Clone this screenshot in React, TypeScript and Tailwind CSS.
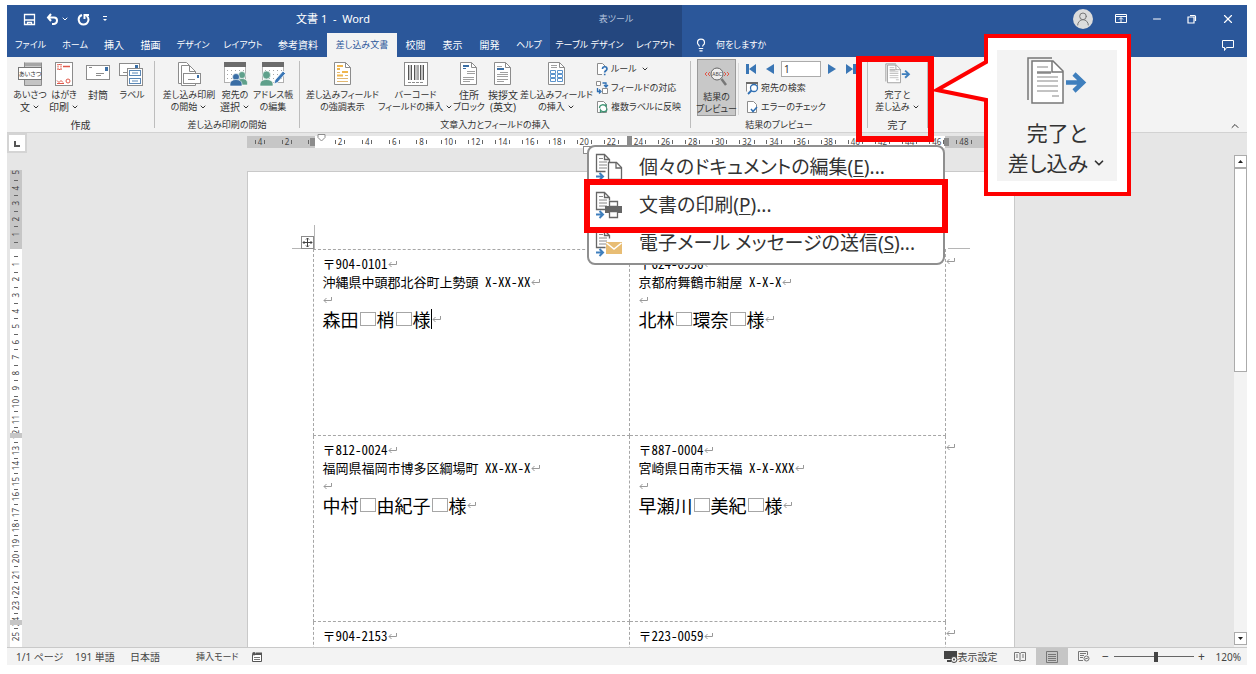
import type { ReactNode } from 'react';
import { Lightbulb, Minus, X, UserRound, ChevronUp, ChevronDown } from 'lucide-react';

const tabs = [
  { name: 'ファイル', width: 'w-[47px]' },
  { name: 'ホーム', width: 'w-[42px]' },
  { name: '挿入', width: 'w-[36px]' },
  { name: '描画', width: 'w-[37px]' },
  { name: 'デザイン', width: 'w-[48px]' },
  { name: 'レイアウト', width: 'w-[52px]' },
  { name: '参考資料', width: 'w-[58px]' },
  { name: '差し込み文書', width: 'w-[70px]', active: true },
  { name: '校閲', width: 'w-[37px]' },
  { name: '表示', width: 'w-[37px]' },
  { name: '開発', width: 'w-[37px]' },
  { name: 'ヘルプ', width: 'w-[42px]' },
];

const labels = [
  [
    { zip: '904-0101', address: '沖縄県中頭郡北谷町上勢頭 X-XX-XX', name: ['森田', '梢', '様'], caret: true },
    { zip: '624-0956', address: '京都府舞鶴市紺屋 X-X-X', name: ['北林', '環奈', '様'] },
  ],
  [
    { zip: '812-0024', address: '福岡県福岡市博多区綱場町 XX-XX-X', name: ['中村', '由紀子', '様'] },
    { zip: '887-0004', address: '宮崎県日南市天福 X-X-XXX', name: ['早瀬川', '美紀', '様'] },
  ],
  [
    { zip: '904-2153', address: '', name: [] },
    { zip: '223-0059', address: '', name: [] },
  ],
];

const labelSize = (text: string) => (/[ぁ-ヶ]/.test(text) ? 'text-[9px]' : 'text-[10px]');

const Caret = () => <ChevronDown className="inline w-2 h-2 ml-0.5" strokeWidth={3} />;

/* ---------- icons ---------- */

const GreetingIcon = () => (
  <svg width="26" height="26" viewBox="0 0 26 26">
    <path d="M7 1.5h17v4H7z" fill="#a6a6a6" />
    <path d="M7.5 1.5v23h17v-23M9 20.5h14M9 22.5h14" fill="none" stroke="#8c8c8c" />
    <path d="M8 19h16v5H8z" fill="#c4c4c4" />
    <rect x="1.5" y="6.5" width="23" height="12" fill="#fff" stroke="#777" />
    <text x="13" y="15" fontSize="6" textAnchor="middle" fill="#333">あいさつ</text>
  </svg>
);

const PostcardIcon = () => (
  <svg width="26" height="26" viewBox="0 0 26 26">
    <rect x="4.500" y="1.500" width="17" height="23" fill="#fff" stroke="#8c8c8c" />
    <g stroke="#e0584a" fill="none">
      <path d="M6.500 3.500h4M6.500 8.500h4" strokeDasharray="1 .5" />
      <path d="M7 3v6M10 3v6" strokeDasharray="1.500 .5" />
      <path d="M12 5.500h7" strokeWidth="1.500" />
      <path d="M6 19.500l2 2 2-2 2 2M6 22.500h7" />
      <circle cx="17" cy="20" r="2" />
    </g>
  </svg>
);

const EnvelopeIcon = () => (
  <svg width="26" height="26" viewBox="0 0 26 26">
    <rect x="1.500" y="4.500" width="23" height="14" fill="#fff" stroke="#8c8c8c" />
    <rect x="20" y="6" width="3" height="4" fill="#3a6ea5" />
    <path d="M4 6.500h3M11 12.500h8M11 14.500h5" stroke="#8c8c8c" />
  </svg>
);

const LabelIcon = () => (
  <svg width="26" height="26" viewBox="0 0 26 26">
    <rect x=".5" y="2.500" width="20" height="12" fill="#fff" stroke="#8c8c8c" />
    <rect x="16" y="4" width="3" height="3" fill="#3a6ea5" />
    <path d="M4 11.500h4" stroke="#8c8c8c" />
    <rect x="8.500" y="7.500" width="15" height="17" fill="#fff" stroke="#8c8c8c" />
    <g fill="#fff" stroke="#5b87b5">
      <rect x="10.500" y="9.500" width="11" height="5" />
      <rect x="10.500" y="17.500" width="11" height="5" />
      <path d="M13 12h6M13 20h6" />
    </g>
  </svg>
);

const MergeStartIcon = () => (
  <svg width="26" height="26" viewBox="0 0 26 26">
    <path d="M2.500 22.500v-21h8l5 5v16z" fill="#fff" stroke="#8c8c8c" />
    <path d="M5.500 24.500v-20h8l6 6v14z" fill="#fff" stroke="#8c8c8c" />
    <path d="M13.500 4.500v6h6" fill="none" stroke="#8c8c8c" />
    <rect x="7.500" y="12.500" width="17" height="10" fill="#fff" stroke="#8c8c8c" />
    <rect x="21" y="14" width="2" height="3" fill="#3a6ea5" />
    <path d="M12 18.500h7" stroke="#8c8c8c" />
  </svg>
);

const Sheet = () => (
  <>
    <rect x="2.500" y="1.500" width="21" height="20" fill="#fff" stroke="#b0b0b0" />
    <rect x="2" y="1" width="22" height="5" fill="#6b6b6b" />
    <path d="M5 9.500h18M5 13.500h18M5 17.500h18" stroke="#a6a6a6" strokeDasharray="1 3" />
  </>
);

const RecipientsIcon = () => (
  <svg width="26" height="26" viewBox="0 0 26 26">
    <Sheet />
    <g stroke="#fff" strokeWidth=".6">
      <circle cx="20" cy="14" r="3.500" fill="#5fa08b" />
      <path d="M14.500 24v-2c0-6 11-6 11 0v2z" fill="#5fa08b" />
      <circle cx="14" cy="16" r="3.500" fill="#3a6ea5" />
      <path d="M8 25v-2c0-6 12-6 12 0v2z" fill="#3a6ea5" />
    </g>
  </svg>
);

const EditListIcon = () => (
  <svg width="26" height="26" viewBox="0 0 26 26">
    <Sheet />
    <g stroke="#fff" strokeWidth=".6">
      <circle cx="6.500" cy="14" r="4" fill="#5fa08b" />
      <path d="M0 25v-2c0-6 13-6 13 0v2z" fill="#5fa08b" />
    </g>
    <path d="M14 23l1-4 8-9 2.500 2.500-8 9z" fill="#3a76b5" stroke="#fff" strokeWidth=".8" />
  </svg>
);

const Doc = ({ children }: { children?: ReactNode }) => (
  <svg width="26" height="26" viewBox="0 0 26 26">
    <path d="M4.500 23.500v-22h11l5 5v17z" fill="#fff" stroke="#8c8c8c" />
    <path d="M15.500 1.500v5h5" fill="none" stroke="#8c8c8c" />
    {children}
  </svg>
);

const HighlightIcon = () => (
  <Doc>
    <path d="M7 5h6M7 8h3M12 11h6M7 14.500h6" stroke="#f0b64d" strokeWidth="2" />
    <path d="M7 17.500h11M7 20.500h11M7 11.500h3M15 14.500h3" stroke="#e2b871" />
  </Doc>
);

const BarcodeIcon = () => (
  <svg width="26" height="26" viewBox="0 0 26 26">
    <rect x="1.500" y="1.500" width="23" height="23" fill="#fff" stroke="#8c8c8c" />
    <path d="M5.500 4v15M8.500 4v15M11.500 4v15M15 4v15M17.500 4v15M20.500 4v15" stroke="#555" />
    <path d="M7 4v15M13 4v15M19 4v15" stroke="#888" />
    <path d="M5 21.500h16" stroke="#8c8c8c" strokeDasharray="3 1" />
  </svg>
);

const AddressBlockIcon = () => (
  <Doc>
    <path d="M7 5h6" stroke="#3a6ea5" strokeWidth="2" />
    <path d="M7 7.500h3" stroke="#3a6ea5" />
    <path d="M11 10.500h8M11 12.500h8M7 16.500h11M7 18.500h11M7 20.500h7" stroke="#a0a0a0" />
  </Doc>
);

const GreetingLineIcon = () => (
  <Doc>
    <path d="M7 8h7" stroke="#3a6ea5" strokeWidth="2" />
    <path d="M7 5.500h5M10 11.500h8M7 13.500h11M7 15.500h11M7 18.500h11M7 20.500h7" stroke="#a0a0a0" />
  </Doc>
);

const InsertFieldIcon = () => (
  <Doc>
    <path
      d="M6.500 9.500h5v3h-5zM13.500 9.500h5v3h-5zM6.500 13.500h5v3h-5zM13.500 13.500h5v3h-5zM6.500 17.500h5v3h-5zM13.500 17.500h5v3h-5z"
      fill="#fff"
      stroke="#5b93cc"
    />
    <path d="M7 4.500h6M7 6.500h6" stroke="#a0a0a0" />
  </Doc>
);

const RuleIcon = () => (
  <svg width="14" height="14" viewBox="0 0 14 14">
    <path d="M7 12.500H2.500v-11h5l3 3" fill="#fff" stroke="#8c8c8c" />
    <path d="M7.500 7c0-3 4.500-3 4.500 0 0 2-2.300 1.500-2.300 3.500M9.700 11.700v1.500" fill="none" stroke="#2f6fb3" strokeWidth="1.600" />
  </svg>
);

const MatchIcon = () => (
  <svg width="14" height="14" viewBox="0 0 14 14">
    <path d="M1.500.5h4v4h-4zM7.500 7.500h5v5h-5z" fill="#fff" stroke="#8c8c8c" />
    <path d="M7.500 2h3.500v3.500M9 4l2 2 2-2M2.500 7v3.500H5M4 8.500l2 2-2 2" fill="none" stroke="#2f6fb3" strokeWidth="1.300" />
  </svg>
);

const UpdateLabelsIcon = () => (
  <svg width="14" height="14" viewBox="0 0 14 14">
    <path d="M2.500 12.500v-11h6l3 3v8z" fill="#fff" stroke="#8c8c8c" />
    <path d="M4.500 8c0-4 5-4 6.500-1.500V4M12 8.500c0 4-5 4-6.500 1.500v3" fill="none" stroke="#3f9474" strokeWidth="1.300" />
  </svg>
);

const PreviewIcon = () => (
  <svg width="28" height="26" viewBox="0 0 28 26">
    <circle cx="14" cy="11" r="6" fill="#eee" stroke="#666" />
    <path d="M18.500 16l4.500 6" stroke="#777" strokeWidth="2.500" />
    <text x="14" y="13" fontSize="5" textAnchor="middle" fill="#444">ABC</text>
    <path d="M4 9l-2 2 2 2M7 9l-2 2 2 2M21 9l2 2-2 2M24 9l2 2-2 2" fill="none" stroke="#e0584a" />
  </svg>
);

const FindIcon = () => (
  <svg width="14" height="14" viewBox="0 0 14 14">
    <path d="M1.500 10.500v-9h11v4" fill="#fff" stroke="#8c8c8c" />
    <path d="M1 1h12v2H1z" fill="#6b6b6b" />
    <circle cx="9" cy="7" r="3.500" fill="#fff" stroke="#2f6fb3" strokeWidth="1.300" />
    <path d="M6.500 9.500L3 13" stroke="#2f6fb3" strokeWidth="1.800" />
  </svg>
);

const CheckIcon = () => (
  <svg width="14" height="14" viewBox="0 0 14 14">
    <path d="M2.500 12.500v-11h6l3 3v8z" fill="#fff" stroke="#8c8c8c" />
    <path d="M6 9l2 2.500L12 7" fill="none" stroke="#2f6fb3" strokeWidth="1.500" />
  </svg>
);

const FinishIcon = ({ className }: { className: string }) => (
  <svg className={className} viewBox="0 0 62 50">
    <path d="M2 44V2h24" fill="none" stroke="#777" strokeWidth="1.500" />
    <path d="M6 47V5h21l10 10v32z" fill="#fff" stroke="#777" strokeWidth="1.500" />
    <path d="M26 5v11h11" fill="none" stroke="#777" strokeWidth="1.500" />
    <path d="M11 11h11M11 21h21M11 25h21M11 30h21M11 35h21M26 40h7" stroke="#888" strokeWidth="1.200" />
    <path d="M11 16.500h14" stroke="#888" strokeWidth="2.500" />
    <path d="M40 26.500h17M48 18l9 8.500-9 8.500" fill="none" stroke="#3f7fbd" strokeWidth="4.500" />
  </svg>
);

const MenuDoc = ({ children }: { children?: ReactNode }) => (
  <svg className="w-7 h-7 shrink-0" viewBox="0 0 28 28">
    <path d="M10.500 18.500h-9v-17h8l5 5v3M9.500 1.500v5h5" fill="none" stroke="#666" strokeWidth="1.300" />
    <path d="M4 5.500h4M4 9h8M4 12h8M4 15h8" stroke="#888" />
    <path d="M1 23.500h6M4.500 20l3.500 3.500L4.500 27" fill="none" stroke="#3f7fbd" strokeWidth="2" />
    {children}
  </svg>
);

const ReturnMark = () => (
  <svg className="inline-block shrink-0" width="9" height="8" viewBox="0 0 9 8">
    <path d="M8.500 1v3.500H1M3.500 2L1 4.500 3.500 7" fill="none" stroke="#999" />
  </svg>
);

/* ---------- ribbon ---------- */

const RibbonButton = ({ icon, lines, caret, className }: { icon: ReactNode; lines: string[]; caret?: boolean; className: string }) => (
  <button className={`flex flex-col items-center pt-1 ${className}`}>
    <span className="flex h-7 items-start justify-center">{icon}</span>
    {lines.map((line, i) => (
      <span key={i} className={`flex h-3 items-center whitespace-nowrap leading-3 ${labelSize(line)}`}>
        {line}
        {caret && i === lines.length - 1 && <Caret />}
      </span>
    ))}
  </button>
);

const SmallButton = ({ icon, label, caret }: { icon: ReactNode; label: string; caret?: boolean }) => (
  <button className="flex h-[19px] items-center gap-0.5 whitespace-nowrap text-[9px]">
    {icon}
    {label}
    {caret && <Caret />}
  </button>
);

const Group = ({ title, className, children }: { title: string; className: string; children: ReactNode }) => (
  <section className={`relative flex h-full shrink-0 flex-col ${className}`}>
    <div className="flex h-[62px]">{children}</div>
    <h2 className={`text-center leading-3 ${labelSize(title)}`}>{title}</h2>
  </section>
);

const Divider = () => <div className="my-1 w-px shrink-0 bg-[#bdbdbd]" />;

const MergeMenu = () => (
  <div className="absolute top-[88px] -right-[18px] h-[120px] w-[358px] rounded-lg border-2 border-[#8f8f8f] bg-white text-[19px] text-[#333]">
    <button className="flex h-10 w-full items-center gap-4 pl-1.5">
      <MenuDoc>
        <path d="M13.500 26.500v-17h8l5 5v12z" fill="#fff" stroke="#666" strokeWidth="1.300" />
        <path d="M21 9.500v5.500h5.500" fill="none" stroke="#666" strokeWidth="1.300" />
      </MenuDoc>
      <span className="whitespace-nowrap">個々のドキュメントの編集(<u className="underline-offset-2">E</u>)...</span>
    </button>
    <button className="flex h-9 w-full items-center gap-4 pl-1.5">
      <MenuDoc>
        <path d="M10 15h17v7H10z" fill="#666" />
        <path d="M14.500 10.500h8v5h-8zM14.500 20.500h8v6h-8z" fill="#fff" stroke="#666" strokeWidth="1.300" />
      </MenuDoc>
      <span className="whitespace-nowrap">文書の印刷(<u className="underline-offset-2">P</u>)...</span>
    </button>
    <button className="flex h-10 w-full items-center gap-4 pl-1.5">
      <MenuDoc>
        <path d="M11 13h16v12H11z" fill="#e8bd74" />
        <path d="M11.500 14l7.500 6 7.500-6" fill="none" stroke="#fff" strokeWidth="1.500" />
      </MenuDoc>
      <span className="whitespace-nowrap">電子メール メッセージの送信(<u className="underline-offset-2">S</u>)...</span>
    </button>
    <div className="absolute top-8 -left-[5px] h-[54px] w-[364px] border-6 border-[#fe0000]" />
  </div>
);

const Balloon = () => (
  <div className="absolute -top-[23px] left-[65px] h-[162px] w-[198px]">
    <svg className="absolute inset-0" width="198" height="162" viewBox="0 0 198 162">
      <path d="M53 2h143v158H53V66L4 56l49-28z" fill="#fff" stroke="#fe0000" strokeWidth="4" />
    </svg>
    <div className="absolute top-4 left-16 flex h-[131px] w-[120px] flex-col items-center bg-[#f3f3f3] pt-1.5 text-[21px] text-[#333]">
      <FinishIcon className="h-[50px] w-[62px]" />
      <span className="mt-3 leading-[30px]">完了と</span>
      <span className="flex items-center gap-1 whitespace-nowrap leading-[30px]">
        差し込み
        <ChevronDown className="w-3.5 h-3.5" strokeWidth={3} />
      </span>
    </div>
  </div>
);

const Ribbon = () => (
  <div className="relative z-20 flex h-[76px] shrink-0 border-b border-[#d2d2d2] bg-[#f3f3f3] text-[#333]">
    <Group title="作成" className="w-[147px]">
      <div className="flex pl-1.5">
        <RibbonButton icon={<GreetingIcon />} lines={['あいさつ', '文']} caret className="w-[34px]" />
        <RibbonButton icon={<PostcardIcon />} lines={['はがき', '印刷']} caret className="w-[34px]" />
        <RibbonButton icon={<EnvelopeIcon />} lines={['封筒']} className="w-[34px]" />
        <RibbonButton icon={<LabelIcon />} lines={['ラベル']} className="w-[34px]" />
      </div>
    </Group>
    <Divider />
    <Group title="差し込み印刷の開始" className="w-[144px]">
      <div className="flex pl-1">
        <RibbonButton icon={<MergeStartIcon />} lines={['差し込み印刷', 'の開始']} caret className="w-[60px]" />
        <RibbonButton icon={<RecipientsIcon />} lines={['宛先の', '選択']} caret className="w-[32px]" />
        <RibbonButton icon={<EditListIcon />} lines={['アドレス帳', 'の編集']} className="w-[44px]" />
      </div>
    </Group>
    <Divider />
    <Group title="文章入力とフィールドの挿入" className="w-[390px]">
      <div className="flex pl-1.5">
        <RibbonButton icon={<HighlightIcon />} lines={['差し込みフィールド', 'の強調表示']} className="w-[73px]" />
        <RibbonButton icon={<BarcodeIcon />} lines={['バーコード', 'フィールドの挿入']} caret className="w-[73px]" />
        <RibbonButton icon={<AddressBlockIcon />} lines={['住所', 'ブロック']} className="w-[34px]" />
        <RibbonButton icon={<GreetingLineIcon />} lines={['挨拶文', '(英文)']} className="w-[34px]" />
        <RibbonButton icon={<InsertFieldIcon />} lines={['差し込みフィールド', 'の挿入']} caret className="w-[73px]" />
        <div className="ml-0.5 flex flex-col pt-0.5">
          <SmallButton icon={<RuleIcon />} label="ルール" caret />
          <SmallButton icon={<MatchIcon />} label="フィールドの対応" />
          <SmallButton icon={<UpdateLabelsIcon />} label="複数ラベルに反映" />
        </div>
      </div>
    </Group>
    <Divider />
    <Group title="結果のプレビュー" className="w-[176px]">
      <div className="flex pt-0.5 pl-1.5">
        <div className="h-[57px] w-[39px] bg-[#c8c8c8] ring-1 ring-[#9a9a9a] ring-inset">
          <RibbonButton icon={<PreviewIcon />} lines={['結果の', 'プレビュー']} className="w-full" />
        </div>
        <div className="mx-0.5 my-1 w-px bg-[#dadada]" />
        <div className="ml-1 flex flex-col">
          <div className="flex h-[19px] items-center">
            <button aria-label="先頭のレコード">
              <svg width="12" height="12" viewBox="0 0 12 12" fill="#3a76b5"><path d="M1 1h3v10H1zM11 1v10L4 6z" /></svg>
            </button>
            <button aria-label="前のレコード" className="ml-2">
              <svg width="10" height="12" viewBox="0 0 10 12" fill="#3a76b5"><path d="M9 1v10L1 6z" /></svg>
            </button>
            <input aria-label="レコード" defaultValue="1" className="mx-1.5 h-4 w-10 border border-[#ababab] bg-white px-0.5 outline-none" />
            <button aria-label="次のレコード">
              <svg width="10" height="12" viewBox="0 0 10 12" fill="#3a76b5"><path d="M1 1v10l8-5z" /></svg>
            </button>
            <button aria-label="最後のレコード" className="ml-2">
              <svg width="12" height="12" viewBox="0 0 12 12" fill="#3a76b5"><path d="M8 1h3v10H8zM1 1v10l7-5z" /></svg>
            </button>
          </div>
          <SmallButton icon={<FindIcon />} label="宛先の検索" />
          <SmallButton icon={<CheckIcon />} label="エラーのチェック" />
        </div>
      </div>
    </Group>
    <Divider />
    <Group title="完了" className="w-[59px]">
      <RibbonButton icon={<FinishIcon className="mt-0.5 h-[21px] w-[26px]" />} lines={['完了と', '差し込み']} caret className="w-full" />
      <MergeMenu />
      <div className="absolute -top-px -left-3 h-[86px] w-[78px] border-6 border-[#fe0000]" />
      <Balloon />
    </Group>
    <Divider />
    <div className="flex flex-1 items-end justify-end pr-1.5">
      <button aria-label="リボンを折りたたむ"><ChevronUp className="w-3 h-3" /></button>
    </div>
  </div>
);

/* ---------- title bar ---------- */

const Header = () => (
  <header className="shrink-0 bg-[#2b579a] text-white">
    <div className="flex h-7">
      <div className="flex w-[543px] items-center">
        <button aria-label="上書き保存" className="ml-4">
          <svg width="13" height="13" viewBox="0 0 13 13" fill="none" stroke="#fff" strokeWidth="1.300"><path d="M1.500 1.500h10v10h-10zM1.500 7h10M4.500 11.500v-2h4v2" /></svg>
        </button>
        <button aria-label="元に戻す" className="ml-2.5 flex items-center">
          <svg width="13" height="13" viewBox="0 0 13 13" fill="none" stroke="#fff" strokeWidth="2"><path d="M5 1L2 4.500 5 8M2 4.500h6c4 0 4 6 0 6.500H6" /></svg>
          <Caret />
        </button>
        <button aria-label="繰り返し" className="ml-2">
          <svg width="13" height="13" viewBox="0 0 13 13" fill="none" stroke="#fff" strokeWidth="2"><path d="M5 2C-.5 4 1.500 11.500 6.500 11.500S13 5 9.500 3M7.500 6V2H12" /></svg>
        </button>
        <button aria-label="クイック アクセス ツール バーのカスタマイズ" className="ml-3">
          <svg width="6" height="8" viewBox="0 0 6 8" fill="#fff"><path d="M1 1h4v1H1zM1 4h4L3 6z" /></svg>
        </button>
        <h1 className="flex-1 pl-2 text-center text-[11px]">文書 1&nbsp; -&nbsp; Word</h1>
      </div>
      <div className="flex w-[132px] items-center justify-center bg-[#24477f] text-[9px] text-[#b5c4de]">表ツール</div>
      <div className="flex flex-1 items-center justify-end gap-7 pr-3">
        <span className="flex h-5 w-5 items-center justify-center rounded-full bg-[#dcdcdc] text-[#777]">
          <UserRound className="w-4 h-4" strokeWidth={1.500} />
        </span>
        <button aria-label="リボンの表示オプション" className="-ml-1.5">
          <svg width="12" height="12" viewBox="0 0 12 12" fill="none" stroke="#fff"><path d="M.5 1.500h11v8H.5zM.5 3.500h11M6 9V5M4 6.500l2-2 2 2" /></svg>
        </button>
        <button aria-label="最小化" className="-ml-1"><Minus className="w-3 h-3" /></button>
        <button aria-label="元に戻す (縮小)" className="-ml-1">
          <svg width="10" height="10" viewBox="0 0 10 10" fill="none" stroke="#fff" strokeWidth="1.200"><path d="M1 3h6v6H1zM3 1.500h4.500q1 0 1 1V7" /></svg>
        </button>
        <button aria-label="閉じる" className="-ml-1"><X className="w-3.5 h-3.5" /></button>
      </div>
    </div>
    <nav className="flex h-6">
      {tabs.map(tab => (
        <button
          key={tab.name}
          className={`flex shrink-0 items-center justify-center whitespace-nowrap ${labelSize(tab.name)} ${tab.width} ${tab.active ? 'bg-[#f3f3f3] text-[#2b579a]' : ''}`}
        >
          {tab.name}
        </button>
      ))}
      <button className="w-[79px] shrink-0 whitespace-nowrap bg-[#24477f] text-[9px]">テーブル デザイン</button>
      <button className="w-[53px] shrink-0 whitespace-nowrap bg-[#24477f] text-[9px]">レイアウト</button>
      <button className="ml-3 flex items-center gap-2 text-[9px]">
        <Lightbulb className="w-3.5 h-3.5" />
        何をしますか
      </button>
      <button aria-label="コメント" className="mr-3 ml-auto">
        <svg width="14" height="13" viewBox="0 0 14 13" fill="none" stroke="#fff"><path d="M1.500 1.500h11v7h-7l-2 3v-3h-2z" /></svg>
      </button>
    </nav>
  </header>
);

/* ---------- document ---------- */

const Tick = ({ value }: { value: number }) => (
  <span className="flex min-w-0 flex-1 items-center justify-center gap-0.5">
    <i className="h-1 w-px bg-[#666]" />
    {value}
    <i className="h-1 w-px bg-[#666]" />
  </span>
);

const HorizontalRuler = () => (
  <div className="flex h-5 shrink-0">
    <div className="w-5 shrink-0 border-2 border-[#d4d4d4] bg-white">
      <svg width="16" height="16" viewBox="0 0 16 16"><path d="M6 6v5h5" fill="none" stroke="#555" strokeWidth="2" /></svg>
    </div>
    <div className="flex flex-1 justify-center pt-[3px]">
      <div className="relative flex h-3 w-[768px] bg-[#c6c6c6] text-[8px] leading-3 text-[#444]">
        <div className="flex w-[54px]">
          <Tick value={4} />
          <Tick value={2} />
        </div>
        <div className="flex w-[14px] items-center justify-end gap-px">
          <i className="h-1 w-px bg-[#666]" />
          <i className="h-2 w-[5px] bg-[#8c8c8c]" />
        </div>
        <div className="flex w-[630px] bg-white">
          <div className="ml-3 flex w-[651px] shrink-0">
            {Array.from({ length: 24 }, (_, i) => <Tick key={i} value={(i + 1) * 2} />)}
          </div>
        </div>
        <svg className="absolute -top-0.5 left-[70px]" width="9" height="8" viewBox="0 0 9 8"><path d="M1 .5h7v3L4.500 7 1 3.500z" fill="#fff" stroke="#8c8c8c" /></svg>
        <i className="absolute top-0 left-[380px] h-2.5 w-[5px] bg-[#8c8c8c]" />
        <i className="absolute top-0.5 left-[697px] h-2 w-[5px] bg-[#8c8c8c]" />
        <i className="absolute top-2.5 left-[336px] h-2 w-2 border border-[#8c8c8c] bg-white" />
      </div>
    </div>
    <div className="w-[13px]" />
  </div>
);

const VTick = ({ value }: { value: number }) => (
  <span className="flex min-h-0 flex-1 flex-col items-center justify-between">
    <i className="h-px w-1 shrink-0 bg-[#666]" />
    <span className="rotate-180 leading-3 [writing-mode:vertical-rl]">{value}</span>
    <i className="h-0" />
  </span>
);

const VerticalRuler = () => (
  <div className="w-5 shrink-0 pt-[17px] pl-[3px]">
    <div className="relative w-3 bg-white text-[8px] text-[#444]">
      <div className="flex h-[79px] flex-col overflow-hidden bg-[#c6c6c6]">
        <div className="-mt-1.5 flex h-[78px] shrink-0 flex-col">
          {[5, 4, 3, 2, 1].map(n => <VTick key={n} value={n} />)}
        </div>
        <i className="mx-auto h-px w-1 bg-[#666]" />
      </div>
      <div className="mt-[7px] flex h-[388px] flex-col">
        {Array.from({ length: 25 }, (_, i) => <VTick key={i} value={i + 1} />)}
      </div>
      <div className="h-3" />
      <i className="absolute top-[263px] left-0 h-[5px] w-3 bg-[#c6c6c6]" />
      <i className="absolute top-[450px] left-0 h-[5px] w-3 bg-[#c6c6c6]" />
    </div>
  </div>
);

const LabelCell = ({ zip, address, name, caret }: { zip: string; address: string; name: string[]; caret?: boolean }) => (
  <td className="h-[186px] w-[316px] border border-dashed border-[#a6a6a6] p-0 pt-[5px] pl-[9px] align-top">
    <p className="flex items-center leading-[18px]">〒{zip}<ReturnMark /></p>
    {address && (
      <>
        <p className="flex items-center leading-[18px]">{address}<ReturnMark /></p>
        <p className="flex h-[18px] items-center"><ReturnMark /></p>
        <p className="flex items-center text-[18px] leading-5">
          {name.map((part, i) => (
            <span key={i} className="flex items-center">
              {i > 0 && <i className="mx-px h-3.5 w-4 border border-[#a6a6a6]" />}
              {part}
            </span>
          ))}
          {caret && <i className="h-5 w-px bg-black" />}
          <ReturnMark />
        </p>
      </>
    )}
  </td>
);

const Page = () => (
  <div className="relative w-[768px] shrink-0 border border-[#c9c9c9] bg-white pt-[77px] pl-[65px]">
    <table className="border-collapse text-[13px] text-black [font-family:'Noto_Sans_CJK_JP',sans-serif] [font-feature-settings:'hwid']">
      <tbody>
        {labels.map((row, i) => (
          <tr key={i}>
            {row.map(label => <LabelCell key={label.zip} {...label} />)}
            <td className="p-0 pt-1 align-top text-[10px]"><ReturnMark /></td>
          </tr>
        ))}
      </tbody>
    </table>
    <i className="absolute top-[53px] left-[66px] h-6 w-px bg-[#b5b5b5]" />
    <i className="absolute top-[76px] left-11 h-px w-[22px] bg-[#b5b5b5]" />
    <i className="absolute top-[76px] left-[700px] h-px w-[22px] bg-[#b5b5b5]" />
    <svg className="absolute top-16 left-[53px]" width="13" height="13" viewBox="0 0 13 13">
      <rect x=".5" y=".5" width="12" height="12" fill="#fff" stroke="#8c8c8c" />
      <path d="M6.500 2v9M2 6.500h9M5 3.500L6.500 2 8 3.500M5 9.500L6.500 11 8 9.500M3.500 5L2 6.500 3.500 8M9.500 5L11 6.500 9.500 8" fill="none" stroke="#444" />
    </svg>
  </div>
);

const ScrollBar = () => (
  <div className="mt-0.5 flex w-[13px] shrink-0 flex-col bg-[#f3f3f3]">
    <button aria-label="上へスクロール" className="flex h-[13px] items-center justify-center border border-[#ababab] bg-white">
      <svg width="7" height="5" viewBox="0 0 7 5"><path d="M1 4h5L3.500 1z" fill="#222" /></svg>
    </button>
    <div className="flex-1">
      <div className="h-[44%] border border-[#ababab] bg-white" />
    </div>
    <button aria-label="下へスクロール" className="mb-0.5 flex h-[13px] items-center justify-center border border-[#ababab] bg-white">
      <svg width="7" height="5" viewBox="0 0 7 5"><path d="M1 1h5L3.500 4z" fill="#222" /></svg>
    </button>
  </div>
);

const StatusBar = () => (
  <footer className="flex h-[18px] shrink-0 items-center border-t border-[#c9c9c9] bg-[#f3f3f3] pr-1.5 pl-[9px] text-[#444]">
    <span className="w-[59px]">1/1 ページ</span>
    <span className="w-[55px]">191 単語</span>
    <span className="w-[66px]">日本語</span>
    <span className="w-14 text-[9px]">挿入モード</span>
    <svg width="11" height="10" viewBox="0 0 11 10"><path d="M.5 2.500h9v7h-9z" fill="#fff" stroke="#555" /><circle cx="2" cy="1.800" r="1.800" fill="#555" /><path d="M4 .5h6v2.500H4z" fill="#555" /><path d="M2 5.500h6M2 7.500h6" stroke="#777" /></svg>
    <div className="flex-1" />
    <button className="flex items-center">
      <svg width="14" height="12" viewBox="0 0 14 12"><path d="M0 0h13v8H0zM3 9h4v2H3z" fill="#444" /><circle cx="10" cy="8.500" r="3" fill="#f3f3f3" stroke="#444" /><circle cx="10" cy="8.500" r="1" fill="#444" /></svg>
      表示設定
    </button>
    <button aria-label="閲覧モード" className="ml-4">
      <svg width="12" height="10" viewBox="0 0 12 10" fill="none" stroke="#777"><path d="M.5.5h4.500L6 1.500 7 .5h4.500v8H7L6 9.500 5 8.500H.5zM6 1v8M2 3h2M2 5h2M8 3h2M8 5h2" /></svg>
    </button>
    <button aria-label="印刷レイアウト" className="ml-2.5 flex h-[17px] w-8 items-center justify-center bg-[#c6c6c6]">
      <svg width="12" height="12" viewBox="0 0 12 12" fill="none" stroke="#777"><path d="M.5.5h11v11H.5zM2 3.500h8M2 5.500h8M2 7.500h8M2 9.500h8" /></svg>
    </button>
    <button aria-label="Web レイアウト" className="ml-2.5">
      <svg width="12" height="11" viewBox="0 0 12 11" fill="none" stroke="#777"><path d="M5 9.500H.5v-9h9V4M2 2.500h6M2 4.500h4M2 6.500h3" /><circle cx="8.500" cy="7.500" r="2.500" /><path d="M7 8l3-1" /></svg>
    </button>
    <button aria-label="縮小" className="ml-3 w-2 text-[12px] leading-4">−</button>
    <input
      type="range"
      aria-label="ズーム"
      min="0"
      max="100"
      defaultValue="53"
      className="mx-1 h-3 w-20 appearance-none bg-[linear-gradient(#666,#666)] bg-[length:100%_1px] bg-center bg-no-repeat [&::-webkit-slider-thumb]:h-2.5 [&::-webkit-slider-thumb]:w-1 [&::-webkit-slider-thumb]:appearance-none [&::-webkit-slider-thumb]:bg-[#444]"
    />
    <button aria-label="拡大" className="w-2 text-[12px] leading-4">+</button>
    <button className="ml-2.5 text-right">120%</button>
  </footer>
);

export default function App() {
  return (
    <div lang="ja" className="flex h-screen flex-col bg-white pt-[5px] pr-[9px] pb-[9px] pl-[7px]">
      <div className="flex min-h-0 flex-1 flex-col bg-[#e6e6e6] text-[10px] leading-3 [font-family:'Noto_Sans','Noto_Sans_CJK_JP',sans-serif] [font-feature-settings:'palt']">
        <Header />
        <Ribbon />
        <HorizontalRuler />
        <main className="flex min-h-0 flex-1 overflow-hidden">
          <VerticalRuler />
          <div className="flex flex-1 items-start justify-center overflow-hidden pt-[18px]">
            <Page />
          </div>
          <ScrollBar />
        </main>
        <StatusBar />
      </div>
    </div>
  );
}
